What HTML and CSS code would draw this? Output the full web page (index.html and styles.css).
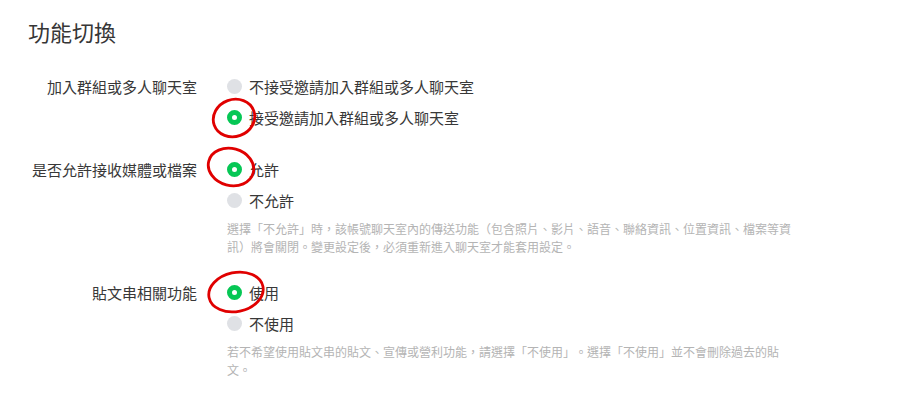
FILE: index.html
```html
<!DOCTYPE html>
<html lang="zh-Hant">
<head>
    <meta charset="UTF-8">
    <meta name="viewport" content="width=device-width, initial-scale=1.0">
    <title>功能切換</title>
    <link rel="stylesheet" href="styles.css">
</head>
<body>
    <div class="page">
        <h2 class="page-title">功能切換</h2>

        <!-- Group chat -->
        <div class="setting">
            <div class="setting-label">加入群組或多人聊天室</div>
            <div class="setting-options">
                <label class="option">
                    <span class="radio"></span>
                    <span>不接受邀請加入群組或多人聊天室</span>
                </label>
                <label class="option">
                    <span class="radio checked"></span>
                    <span>接受邀請加入群組或多人聊天室</span>
                    <svg class="mark mark-1" viewBox="0 0 48 42"><ellipse cx="24" cy="21" rx="21" ry="18.5" transform="rotate(-20 24 21)"/></svg>
                </label>
            </div>
        </div>

        <!-- Media -->
        <div class="setting">
            <div class="setting-label">是否允許接收媒體或檔案</div>
            <div class="setting-options">
                <label class="option">
                    <span class="radio checked"></span>
                    <span>允許</span>
                    <svg class="mark mark-2" viewBox="0 0 52 44"><ellipse cx="26" cy="22" rx="23" ry="18.5" transform="rotate(15 26 22)"/></svg>
                </label>
                <label class="option">
                    <span class="radio"></span>
                    <span>不允許</span>
                </label>
                <p class="note">選擇「不允許」時，該帳號聊天室內的傳送功能（包含照片、影片、語音、聯絡資訊、位置資訊、檔案等資訊）將會關閉。變更設定後，必須重新進入聊天室才能套用設定。</p>
            </div>
        </div>

        <!-- Timeline -->
        <div class="setting">
            <div class="setting-label">貼文串相關功能</div>
            <div class="setting-options">
                <label class="option">
                    <span class="radio checked"></span>
                    <span>使用</span>
                    <svg class="mark mark-3" viewBox="0 0 60 46"><ellipse cx="30" cy="23" rx="27.5" ry="19.5" transform="rotate(-12 30 23)"/></svg>
                </label>
                <label class="option">
                    <span class="radio"></span>
                    <span>不使用</span>
                </label>
                <p class="note">若不希望使用貼文串的貼文、宣傳或營利功能，請選擇「不使用」。選擇「不使用」並不會刪除過去的貼文。</p>
            </div>
        </div>
    </div>
</body>
</html>
```

FILE: styles.css
```css
body {
    margin: 0;
    padding: 0;
    background: #ffffff;
    color: #383838;
    font-family: "Noto Sans CJK TC", "Noto Sans", sans-serif;
    text-spacing-trim: space-all;
    font-feature-settings: "fwid" 1;
}

.page {
    padding: 16px 0 0 28px;
}

.page-title {
    margin: 0 0 25px 0;
    font-size: 22px;
    font-weight: normal;
    line-height: 30px;
    color: #363636;
}

.setting {
    display: grid;
    grid-template-columns: 169px 1fr;
    column-gap: 30px;
    margin-bottom: 21px;
    font-size: 15px;
}

.setting-label {
    text-align: right;
    line-height: 31px;
    white-space: nowrap;
}

.setting-options {
    display: flex;
    flex-direction: column;
}

.option {
    position: relative;
    display: flex;
    align-items: center;
    gap: 7px;
    height: 31px;
    cursor: pointer;
}

.radio {
    width: 15px;
    height: 15px;
    border-radius: 50%;
    background: #dfe1e5;
    box-sizing: border-box;
    flex-shrink: 0;
}

.radio.checked {
    background: #ffffff;
    border: 5px solid #06c755;
}

.note {
    width: 570px;
    margin: 4px 0 0 0;
    font-size: 12px;
    line-height: 18px;
    color: #b4b4b4;
}

/* red annotation circles */
.mark {
    position: absolute;
    fill: none;
    stroke: #e00000;
    stroke-width: 2.8;
    pointer-events: none;
}

.mark-1 {
    left: -17px;
    top: -5px;
    width: 48px;
    height: 42px;
}

.mark-2 {
    left: -22px;
    top: -9px;
    width: 52px;
    height: 44px;
}

.mark-3 {
    left: -21px;
    top: -8px;
    width: 60px;
    height: 46px;
}
```
